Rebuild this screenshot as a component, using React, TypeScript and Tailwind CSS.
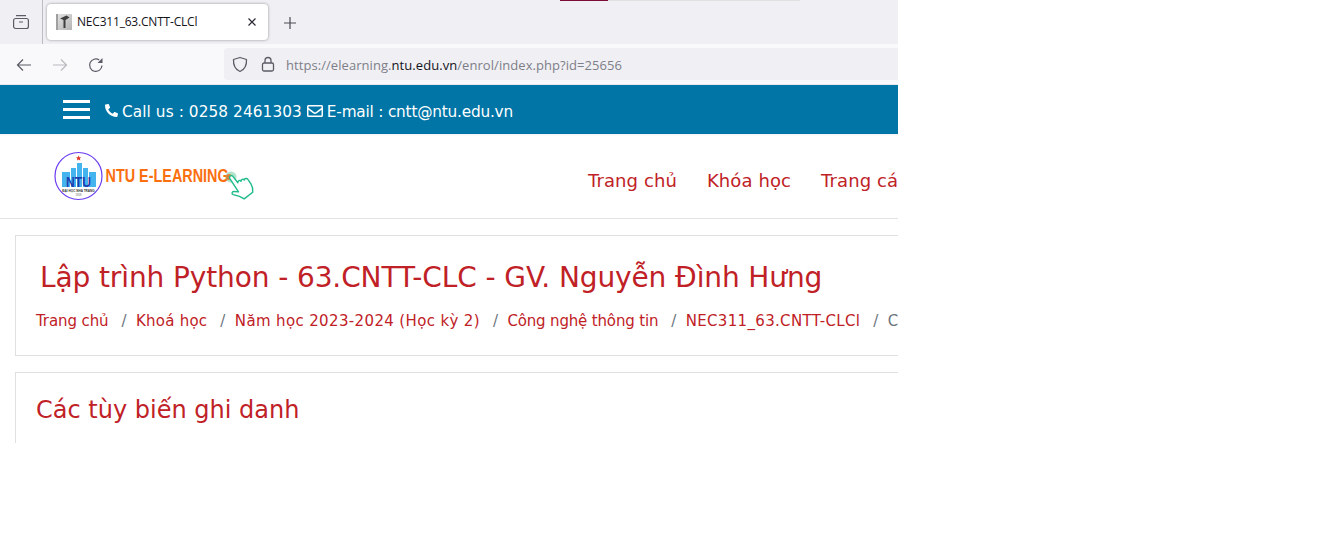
import React from "react";
import { FaPhone, FaRegEnvelope } from "react-icons/fa";

const dv = "font-['DejaVu_Sans',sans-serif]";

function Sep() {
  return (
    <>
      <span className="inline-block w-[13px]" />
      <span className="text-[#6c757d]">/</span>
      <span className="inline-block w-[9.400px]" />
    </>
  );
}

function Logo() {
  return (
    <svg width="204" height="54" viewBox="0 0 204 54" className="block">
      <circle cx="24.500" cy="25" r="23.500" fill="#fff" stroke="#6a3cf0" strokeWidth="1.200" />
      <path d="M24.600 4.500l.8 1.700 1.800.2-1.300 1.200.4 1.800-1.700-.9-1.600.9.3-1.800-1.300-1.200 1.800-.2z" fill="#e0342a" />
      <rect x="8" y="21" width="8" height="15" fill="#45b3ee" />
      <rect x="17" y="17" width="5" height="19" fill="#45b3ee" />
      <rect x="23" y="12" width="5" height="24" fill="#45b3ee" />
      <rect x="29" y="17" width="5" height="19" fill="#45b3ee" />
      <rect x="35" y="21" width="7" height="15" fill="#45b3ee" />
      <text x="24.500" y="35.500" textAnchor="middle" fontFamily="'Liberation Sans',sans-serif" fontSize="14" fontWeight="700" fill="#1d3fb0" textLength="25" lengthAdjust="spacingAndGlyphs">NTU</text>
      <text x="24.500" y="40.500" textAnchor="middle" fontFamily="'Liberation Sans',sans-serif" fontSize="3.100" fontWeight="700" fill="#333">ĐẠI HỌC NHA TRANG</text>
      <text x="24.500" y="44.500" textAnchor="middle" fontFamily="'Liberation Sans',sans-serif" fontSize="2.600" fill="#555">1959</text>
      <text transform="translate(51.500 31) scale(0.8 1)" fontFamily="'Liberation Sans',sans-serif" fontSize="18" fontWeight="700" fill="#fb6f10" textLength="154" lengthAdjust="spacing">NTU E-LEARNING</text>
      <circle cx="177" cy="26" r="5.500" fill="#7fd0a8" opacity="0.6" />
      <circle cx="175" cy="26" r="3" fill="#e0803a" />
      <g transform="translate(177 26) rotate(-28) scale(1.180) translate(-177.500 -26)">
        <path d="M176 26.500c0-2 3-2 3.200 0l1.200 6.500c.3-1.500 2.800-1.500 3 .2.4-1.300 2.700-1.200 2.900.4.500-1.100 2.800-.8 2.900.9l.5 4.500c.2 3-1 5.500-2 7l-9 1.600c-1.500-3-4-5.500-6.500-7.500-1.300-1.200.2-3 1.800-2l3.200 2z" fill="#fff" stroke="#1fbb8b" strokeWidth="1.200" strokeLinejoin="round" />
      </g>
    </svg>
  );
}

export default function App() {
  return (
    <div className="w-[898px] h-[443px] overflow-hidden bg-white">
      <div className="w-[1338px]">
        {/* Browser tab strip */}
        <div className="relative h-[44px] bg-[#f0f0f4] flex items-start font-['Open_Sans',sans-serif] w-[898px]">
          <div className="w-[43px] h-[44px] border-r border-[#bcbcc2] flex items-center justify-center">
            <svg width="18" height="18" viewBox="0 0 18 18" fill="none" stroke="#5b5b66" strokeWidth="1.200">
              <rect x="1.600" y="5.500" width="14.800" height="10" rx="2" />
              <path d="M4 2.700h10M7 9h4" />
            </svg>
          </div>
          <div className="ml-[4px] mt-[4px] w-[221px] h-[36px] bg-white rounded-[4px] shadow-[0_0_3px_rgba(0,0,0,0.4)] flex items-center pl-[9px] pr-[10px]">
            <svg width="16" height="16" viewBox="0 0 16 16" className="shrink-0">
              <defs>
                <linearGradient id="fav" x1="0" y1="0" x2="1" y2="1">
                  <stop offset="0" stopColor="#e4e4e4" />
                  <stop offset="1" stopColor="#b4b4b4" />
                </linearGradient>
              </defs>
              <rect width="16" height="16" fill="url(#fav)" />
              <rect x="0" y="0" width="2" height="16" fill="#a0a0a0" />
              <path d="M4 4.500L10.500 1.500 13.500 3.500 9.500 6v8H7.500V6z" fill="#3f3f3f" />
            </svg>
            <span className="ml-[5px] text-[12px] text-[#15141a] tracking-[-0.2px] whitespace-nowrap">NEC311_63.CNTT-CLCl</span>
            <svg width="12" height="12" viewBox="0 0 12 12" className="ml-auto" stroke="#2b2a33" strokeWidth="1.200" fill="none">
              <path d="M2.500 2.500l7 7M9.500 2.500l-7 7" />
            </svg>
          </div>
          <div className="ml-[15px] mt-[1px] h-[44px] flex items-center">
            <svg width="14" height="14" viewBox="0 0 14 14" stroke="#4b4a55" strokeWidth="1.200" fill="none">
              <path d="M7 1v12M1 7h12" />
            </svg>
          </div>
          <div className="absolute left-[560px] top-0 w-[240px] h-px bg-[#e0e0e0]">
            <div className="w-[48px] h-px bg-[#7a0c36]" />
          </div>
        </div>

        {/* Browser toolbar */}
        <div className="h-[41px] w-[898px] bg-[#f9f9fb] border-b border-[#e8e8ec] flex items-center font-['Open_Sans',sans-serif]">
          <div className="flex items-center pl-[16px] gap-[20px] w-[224px] shrink-0 mt-[2px]">
            <svg width="16" height="16" viewBox="0 0 16 16" fill="none" stroke="#5b5b66" strokeWidth="1.200">
              <path d="M15 8H1.500M7 2.500L1.500 8 7 13.500" />
            </svg>
            <svg width="16" height="16" viewBox="0 0 16 16" fill="none" stroke="#b9b9bf" strokeWidth="1.200">
              <path d="M1 8h13.500M9 2.500L14.500 8 9 13.500" />
            </svg>
            <svg width="16" height="16" viewBox="0 0 16 16" fill="none" stroke="#5b5b66" strokeWidth="1.200">
              <path d="M14 8.500A6.200 6.200 0 1 1 11.200 3" />
              <path d="M14.500 1v5H9.500z" fill="#5b5b66" stroke="none" />
            </svg>
          </div>
          <div className="flex-1 h-[32px] bg-[#f0f0f4] rounded-l-[4px] flex items-center pl-[8px]">
            <svg width="16" height="17" viewBox="0 0 16 17" fill="none" stroke="#5b5b66" strokeWidth="1.300">
              <path d="M8 1.500l6.500 2c.3 5.500-1.500 9.800-6.500 12-5-2.200-6.800-6.500-6.500-12z" strokeLinejoin="round" />
            </svg>
            <svg width="14" height="16" viewBox="0 0 14 16" fill="none" stroke="#5b5b66" strokeWidth="1.300" className="ml-[13px]">
              <rect x="1.500" y="7" width="11" height="8" rx="1.500" />
              <path d="M4 7V4.500a3 3 0 0 1 6 0V7" />
            </svg>
            <span className="ml-[11px] pt-[3px] text-[13px] text-[#7e7e88] tracking-[0.06px] whitespace-nowrap">
              https://elearning.<span className="text-[#15141a]">ntu.edu.vn</span>/enrol/index.php?id=25656
            </span>
          </div>
        </div>

        {/* Contact bar */}
        <div className={`h-[49px] w-[898px] bg-[#0075a6] flex items-center text-white text-[15.300px] ${dv}`}>
          <div className="ml-[63px] w-[27px] h-[19px] flex flex-col justify-between">
            <div className="h-[3px] bg-white" />
            <div className="h-[3px] bg-white" />
            <div className="h-[3px] bg-white" />
          </div>
          <div className="ml-[15px] mt-[2px] flex items-center whitespace-nowrap">
            <FaPhone className="w-[13px] h-[13px] mr-[4px]" style={{ transform: "scaleX(-1)" }} />
            <span className="pt-[4px] tracking-[0.09px]">Call us : 0258 2461303</span>
            <FaRegEnvelope className="w-[16px] h-[16px] ml-[5px] mr-[4px]" />
            <span className="pt-[4px] tracking-[-0.2px]">E-mail : cntt@ntu.edu.vn</span>
          </div>
        </div>

        {/* Site header */}
        <div className={`h-[85px] w-[898px] overflow-hidden border-b border-[#e3e3e3] shadow-[inset_0_3px_3px_-3px_rgba(0,0,0,0.12)] flex items-start ${dv}`}>
          <div className="ml-[54px] mt-[17px] shrink-0"><Logo /></div>
          <nav className="ml-[330px] mt-[36px] flex gap-[30px] text-[18px] leading-[22px] text-[#c02126] whitespace-nowrap shrink-0">
            <span className="tracking-[0.1px]">Trang chủ</span>
            <span className="tracking-[0.1px]">Khóa học</span>
            <span className="tracking-[0.1px]">Trang cá nhân</span>
          </nav>
        </div>

        {/* Content */}
        <div className={`w-[898px] overflow-hidden pl-[15px] pt-[16px] ${dv}`}>
          <div className="w-[1000px] h-[121px] border border-[#e0e0e0] pt-[24px] pl-[24px]">
            <h1 className="text-[28px] leading-[36px] tracking-[-0.11px] text-[#c02126] whitespace-nowrap">Lập trình Python - 63.CNTT-CLC - GV. Nguyễn Đình Hưng</h1>
            <div className="-ml-[4px] mt-[14px] text-[15px] leading-[22px] text-[#c02126] whitespace-nowrap">
              <span className="tracking-[-0.1px]">Trang chủ</span><Sep />
              <span className="tracking-[0.25px]">Khoá học</span><Sep />
              <span className="tracking-[0.36px]">Năm học 2023-2024 (Học kỳ 2)</span><Sep />
              <span className="tracking-[-0.16px]">Công nghệ thông tin</span><Sep />
              <span className="tracking-[0.32px]">NEC311_63.CNTT-CLCl</span><Sep />
              <span className="text-[#6c757d]">Các tùy biến ghi danh</span>
            </div>
          </div>
          <div className="mt-[16px] w-[1000px] h-[100px] border border-[#e0e0e0] pl-[20px] pt-[20px]">
            <h2 className="text-[24px] leading-[34px] text-[#c02126] whitespace-nowrap">Các tùy biến ghi danh</h2>
          </div>
        </div>
      </div>
    </div>
  );
}
